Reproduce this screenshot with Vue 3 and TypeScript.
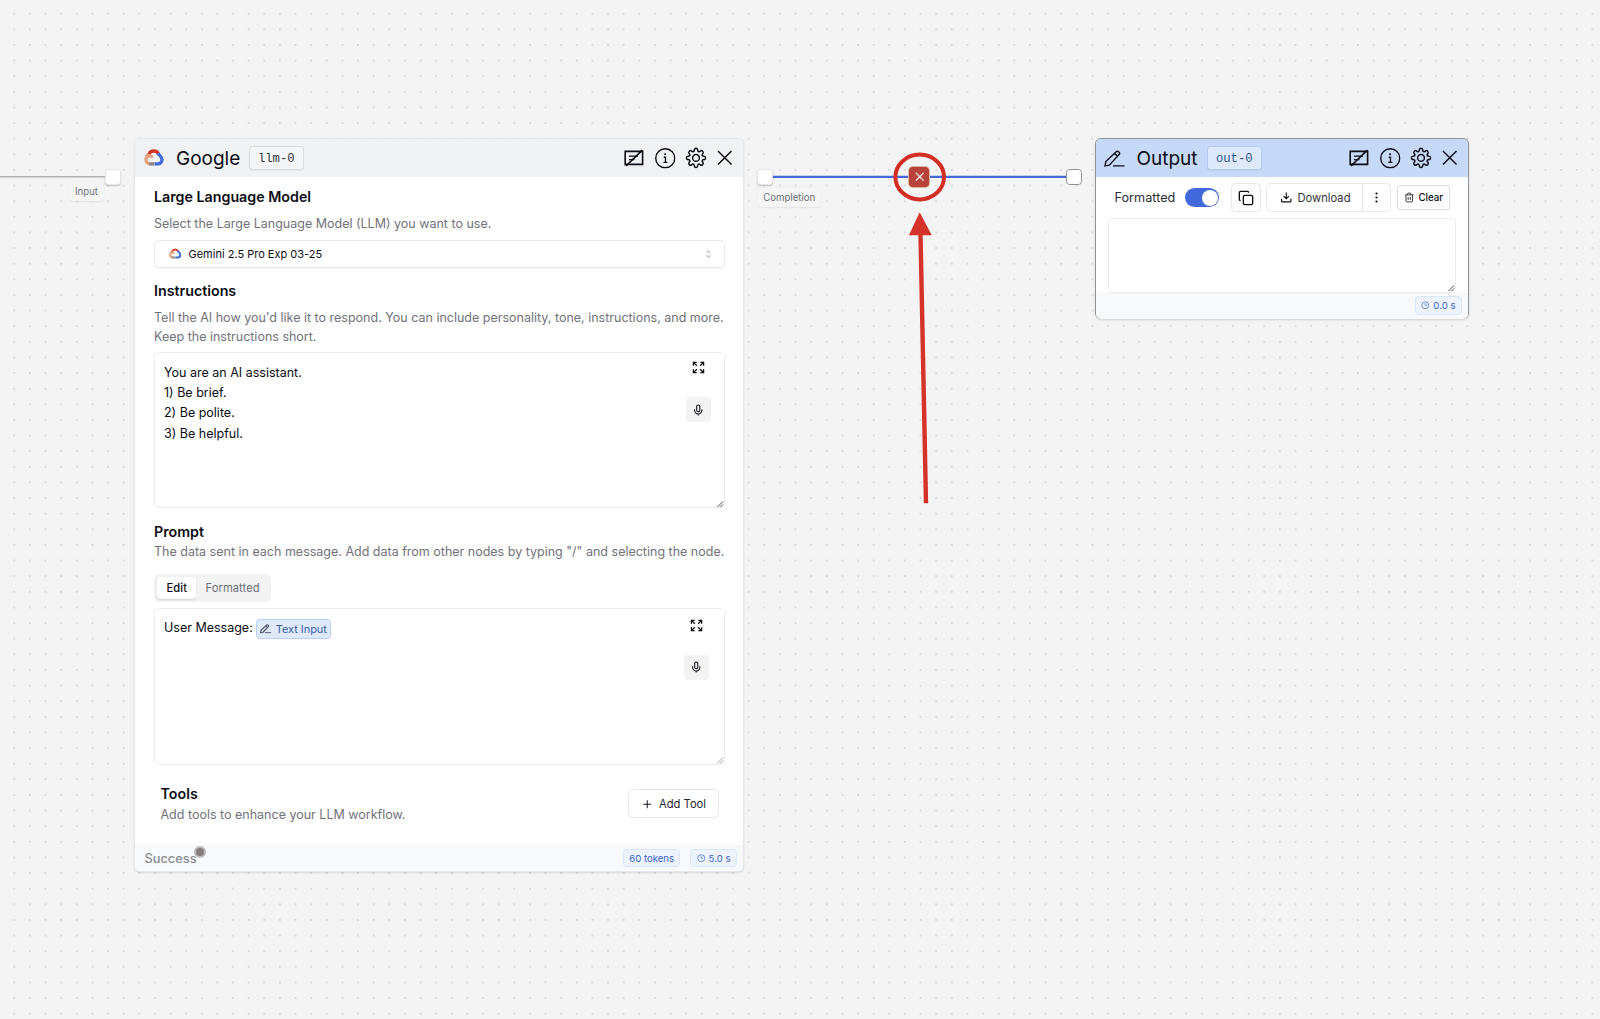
<script setup lang="ts">
const instructions: string[] = [
  'You are an AI assistant.',
  '1) Be brief.',
  '2) Be polite.',
  '3) Be helpful.',
]
</script>

<template>
  <main class="canvas">
    <svg class="grid" width="1600" height="1019" aria-hidden="true">
      <defs>
        <pattern id="dots" x="6.5" y="5.9" width="15.625" height="15.625" patternUnits="userSpaceOnUse">
          <circle cx="7.8" cy="7.8" r="0.85" fill="#cbcbcd" />
        </pattern>
        <symbol id="i-note" viewBox="0 0 20 20">
          <path d="M1.2 3.4h17.4v13H1.2z" stroke-width="1.6" />
          <path d="M5 8.1h9M5 11.6h5.4" stroke-width="1.4" />
          <path d="M2 18 18.3 2.2" stroke-width="1.7" />
        </symbol>
        <symbol id="i-info" viewBox="0 0 20 20">
          <circle cx="10" cy="10" r="9.3" stroke-width="1.35" />
          <path d="M8.5 9h1.7v4.9M8.2 14h3.9" stroke-width="1.35" />
          <circle cx="9.9" cy="6" r="1" fill="currentColor" stroke="none" />
        </symbol>
        <symbol id="i-gear" viewBox="0 0 24 24">
          <path
            d="M10.3 2.6c.3-1.5 3.1-1.5 3.4 0l.3 1.6c.1.6 1.2 1.1 1.8.8l1.4-.9c1.3-.8 3.3 1.2 2.5 2.5l-.9 1.4c-.4.6.1 1.7.8 1.800l1.700.4c1.500.3 1.500 3.100 0 3.400l-1.700.4c-.7.1-1.200 1.200-.8 1.800l.9 1.400c.8 1.300-1.200 3.300-2.500 2.500l-1.400-.9c-.6-.4-1.700.1-1.800.8l-.3 1.600c-.3 1.500-3.100 1.500-3.400 0L10 19.600c-.1-.7-1.200-1.200-1.800-.8l-1.400.9c-1.300.8-3.300-1.200-2.500-2.500l.9-1.400c.4-.6-.1-1.700-.8-1.800l-1.700-.4c-1.500-.3-1.500-3.100 0-3.400l1.700-.4c.7-.1 1.200-1.200.8-1.800l-.9-1.400C3.500 5.300 5.500 3.300 6.800 4.100l1.400.9c.6.3 1.700-.2 1.800-.8z"
            stroke-width="1.6"
          />
          <circle cx="12" cy="11.9" r="3.7" stroke-width="1.6" />
        </symbol>
        <symbol id="i-close" viewBox="0 0 16 16">
          <path d="M1 1l14 14M15 1 1 15" stroke-width="1.5" />
        </symbol>
        <symbol id="i-pen" viewBox="0 0 21 17">
          <path d="M1 15.900l.8-4.400L12.500 1.600c1.300-1.200 4 1.300 2.800 2.700L5.300 15.200 1 15.900zM10.600 3.500l2.900 2.700M9 15.900h11.500" />
        </symbol>
        <symbol id="i-expand" viewBox="0 0 14 14">
          <path d="M1.500 5V1.500H5M9 1.500h3.500V5M12.500 9v3.500H9M5 12.500H1.500V9M1.500 1.500 5.200 5.200M12.500 1.500 8.800 5.200M12.500 12.500 8.800 8.800M1.500 12.500l3.700-3.700" stroke-width="1.400" />
        </symbol>
        <symbol id="i-mic" viewBox="0 0 24 24">
          <path d="M12 2a3 3 0 0 0-3 3v7a3 3 0 0 0 6 0V5a3 3 0 0 0-3-3zM19 10v2a7 7 0 0 1-14 0v-2M12 19v3" stroke-width="2" />
        </symbol>
        <symbol id="i-clock" viewBox="0 0 24 24">
          <circle cx="12" cy="12" r="10" stroke-width="2" />
          <path d="M12 6v6h5" stroke-width="2" />
        </symbol>
        <symbol id="i-cloud" viewBox="0 0 20 17">
          <g fill="none" stroke-width="3.300" stroke-linecap="butt">
            <path d="M2.200 9.500C2.900 6.800 6.200 6.300 8.900 8.300" stroke="#e3a27d" stroke-width="3" />
            <path d="M6.200 14.900C3.900 14.900 2 13.400 2 11.100c0-2.600 1.200-5 3.400-6.300" stroke="#e3a27d" />
            <path d="M4.900 5.200C6.800.9 13 .9 14.700 5.200" stroke="#d43a2c" />
            <path d="M14.100 4.300C15 6.500 18 7.300 18 10.800c0 2.600-2 4.100-3.900 4.100H10.500" stroke="#3f6ddb" />
            <path d="M10.500 14.900H5.200" stroke="#8d8583" />
          </g>
        </symbol>
      </defs>
      <rect width="1600" height="1019" fill="url(#dots)" />
    </svg>

    <svg class="edges" width="1600" height="1019" aria-hidden="true">
      <path d="M0 176.800H108" stroke="#b1b1b3" stroke-width="1.500" />
      <path d="M770 176.800H1068" stroke="#4169d8" stroke-width="2.200" />
    </svg>

    <span class="handle soft h-in"></span>
    <span class="tag t-in">Input</span>
    <span class="handle soft h-out"></span>
    <span class="tag t-out">Completion</span>
    <span class="handle h-target"></span>

    <section class="node llm">
      <header class="head">
        <svg class="logo"><use href="#i-cloud" /></svg>
        <h1>Google</h1>
        <code>llm-0</code>
        <div class="actions">
          <svg class="ic a"><use href="#i-note" /></svg>
          <svg class="ic b"><use href="#i-info" /></svg>
          <svg class="ic c"><use href="#i-gear" /></svg>
          <svg class="ic d"><use href="#i-close" /></svg>
        </div>
      </header>

      <div class="body">
        <h2>Large Language Model</h2>
        <p class="desc d0">Select the Large Language Model (LLM) you want to use.</p>
        <div class="select">
          <svg class="logo-s"><use href="#i-cloud" /></svg>
          <span>Gemini 2.5 Pro Exp 03-25</span>
          <svg class="updown" viewBox="0 0 6 9"><path d="M.8 2.900 3 .8l2.200 2.100M.8 6.100 3 8.200l2.200-2.100" /></svg>
        </div>

        <h2 class="s2">Instructions</h2>
        <p class="desc d1">
          Tell the AI how you'd like it to respond. You can include personality, tone, instructions, and more.<br />Keep
          the instructions short.
        </p>
        <div class="area">
          <div class="text">
            <div v-for="line in instructions" :key="line">{{ line }}</div>
          </div>
          <div class="tools">
            <svg class="expand"><use href="#i-expand" /></svg>
            <span class="mic"><svg><use href="#i-mic" /></svg></span>
          </div>
          <svg class="grip" viewBox="0 0 7 7"><path d="M.5 6.500l6-6M3.700 6.500l2.800-2.800" /></svg>
        </div>

        <h2 class="s3">Prompt</h2>
        <p class="desc d3">
          The data sent in each message. Add data from other nodes by typing "/" and selecting the node.
        </p>
        <div class="tabs">
          <span class="tab on">Edit</span>
          <span class="tab">Formatted</span>
        </div>
        <div class="area second">
          <div class="text inline">
            <span>User Message:</span>
            <span class="ref"><svg class="pen-s"><use href="#i-pen" /></svg>Text Input</span>
          </div>
          <div class="tools">
            <svg class="expand"><use href="#i-expand" /></svg>
            <span class="mic"><svg><use href="#i-mic" /></svg></span>
          </div>
          <svg class="grip faint" viewBox="0 0 7 7"><path d="M.5 6.500l6-6M3.700 6.500l2.800-2.800" /></svg>
        </div>

        <div class="toolrow">
          <div>
            <h2>Tools</h2>
            <p class="desc d4">Add tools to enhance your LLM workflow.</p>
          </div>
          <span class="add">
            <svg viewBox="0 0 9 9"><path d="M4.500.3v8.400M.3 4.500h8.400" /></svg>
            Add Tool
          </span>
        </div>
      </div>

      <footer class="foot">
        <span class="status">Success<i class="pulse"></i></span>
        <span class="pill tokens">60 tokens</span>
        <span class="pill"><svg><use href="#i-clock" /></svg>5.0 s</span>
      </footer>
    </section>

    <section class="node out">
      <header class="head">
        <svg class="pen"><use href="#i-pen" /></svg>
        <h1>Output</h1>
        <code>out-0</code>
        <div class="actions">
          <svg class="ic a"><use href="#i-note" /></svg>
          <svg class="ic b"><use href="#i-info" /></svg>
          <svg class="ic c"><use href="#i-gear" /></svg>
          <svg class="ic d"><use href="#i-close" /></svg>
        </div>
      </header>
      <div class="obody">
        <div class="bar">
          <span class="lbl">Formatted</span>
          <span class="switch"><i></i></span>
          <span class="btn copy">
            <svg viewBox="0 0 24 24"><rect x="8" y="8" width="14" height="14" rx="2" /><path d="M4 16c-1.100 0-2-.9-2-2V4c0-1.100.9-2 2-2h10c1.100 0 2 .9 2 2" /></svg>
          </span>
          <span class="btn split">
            <span class="dl">
              <svg viewBox="0 0 24 24"><path d="M3 15v4a2 2 0 0 0 2 2h14a2 2 0 0 0 2-2v-4M7 10l5 5 5-5M12 15V3" /></svg>
              Download
            </span>
            <span class="more">
              <svg viewBox="0 0 3 11"><circle cx="1.500" cy="1.500" r="1.100" /><circle cx="1.500" cy="5.500" r="1.100" /><circle cx="1.500" cy="9.500" r="1.100" /></svg>
            </span>
          </span>
          <span class="btn clear">
            <svg viewBox="0 0 24 24"><path d="M2.500 6h19M19.500 6v14c0 1-1 2-2 2h-11c-1 0-2-1-2-2V6M8 6V4c0-1 1-2 2-2h4c1 0 2 1 2 2v2M9.500 11v6.500M14.500 11v6.500" /></svg>
            Clear
          </span>
        </div>
        <div class="oarea">
          <svg class="grip" viewBox="0 0 7 7"><path d="M.5 6.500l6-6M3.700 6.500l2.800-2.800" /></svg>
        </div>
      </div>
      <footer class="foot">
        <span class="pill"><svg><use href="#i-clock" /></svg>0.0 s</span>
      </footer>
    </section>

    <span class="remove">
      <svg viewBox="0 0 10 10"><path d="M1 1l8 8M9 1 1 9" /></svg>
    </span>

    <svg class="marks" width="1600" height="1019" aria-hidden="true">
      <ellipse cx="919.700" cy="177" rx="24.300" ry="22.400" fill="none" stroke="#d32f25" stroke-width="4" />
      <path d="M919.700 212.300 931.800 235.300h-22.900z" fill="#d5332a" stroke="none" />
      <path d="M920.500 234 926 503.300" stroke="#d5332a" stroke-width="4.400" />
    </svg>
  </main>
</template>

<style>
body {
  background: #f4f4f4;
}
</style>

<style scoped>
.canvas {
  position: relative;
  width: 1600px;
  height: 1019px;
  overflow: hidden;
  background: #f4f4f4;
  color: #0b0c14;
  font-family: Inter, 'Liberation Sans', sans-serif;
}
.canvas * {
  box-sizing: border-box;
}
svg {
  flex: none;
  display: block;
  overflow: visible;
  fill: none;
  stroke: currentColor;
}
.grid {
  stroke: none;
}
.grid,
.edges,
.marks {
  position: absolute;
  left: 0;
  top: 0;
}
.handle {
  position: absolute;
  top: 168.600px;
  width: 16px;
  height: 16px;
  border: 1.200px solid #929292;
  border-radius: 3.500px;
  background: #fff;
}
.handle.soft {
  border-color: #e6e6e7;
  box-shadow: 0 1px 1.500px rgba(0, 0, 0, 0.2);
}
.h-in {
  left: 105.400px;
}
.h-out {
  left: 757px;
}
.h-target {
  left: 1066px;
}
.tag {
  position: absolute;
  display: flex;
  align-items: center;
  justify-content: center;
  height: 19px;
  border-radius: 4px;
  background: #f5f5f5;
  box-shadow: 0 0.500px 1.500px rgba(0, 0, 0, 0.07);
  color: #6f7079;
  font-size: 9.650px;
}
.t-in {
  left: 69px;
  top: 182px;
  width: 35px;
}
.t-out {
  left: 757.500px;
  top: 188px;
  width: 63.500px;
}
.node {
  position: absolute;
  top: 139px;
  display: flex;
  flex-direction: column;
  border-radius: 5px;
  background: #fff;
}
.llm {
  left: 135px;
  width: 608px;
  height: 732px;
  box-shadow:
    0 0 0 1px #e6e7e9,
    0 1px 2.500px rgba(0, 0, 0, 0.28);
}
.out {
  left: 1096px;
  width: 372px;
  height: 179px;
  box-shadow:
    0 0 0 1px #929398,
    0 1px 3px rgba(0, 0, 0, 0.3);
}
.head {
  display: flex;
  align-items: center;
  flex: none;
  height: 38px;
  border-radius: 5px 5px 0 0;
  background: #f1f2f4;
}
.out .head {
  background: #c6d9f8;
}
.logo {
  width: 20px;
  height: 17px;
  margin-left: 9px;
  position: relative;
  top: -0.500px;
}
.pen {
  width: 21px;
  height: 17px;
  margin-left: 8px;
  stroke-width: 1.400;
}
h1 {
  margin: 1px 0 0 12px;
  width: 73px;
  font-size: 19px;
  font-weight: 400;
  line-height: 30px;
}
.out h1 {
  margin-left: 11.500px;
  width: 70.500px;
}
code {
  display: flex;
  align-items: center;
  justify-content: center;
  width: 54.500px;
  height: 23.500px;
  padding-top: 1px;
  border: 1px solid #d9dbde;
  border-radius: 3.500px;
  background: #f4f5f6;
  color: #33343c;
  font:
    12.200px 'Liberation Mono',
    monospace;
  box-shadow: 0 1px 1px rgba(0, 0, 0, 0.05);
}
.out code {
  border-color: #b3cbf0;
  background: #deeafb;
  color: #2f5597;
}
.actions {
  display: flex;
  align-items: center;
  margin-left: auto;
  margin-right: 10.900px;
}
.a {
  width: 20px;
  height: 20px;
}
.b {
  width: 20.500px;
  height: 20.500px;
  margin-left: 11px;
}
.c {
  width: 22px;
  height: 22px;
  margin-left: 10px;
}
.d {
  width: 15.500px;
  height: 15.500px;
  margin-left: 9.500px;
}
.body {
  flex: 1;
  padding: 10px 18.500px 0 19px;
}
h2 {
  margin: 0;
  font-size: 14.250px;
  font-weight: 600;
  line-height: 20px;
}
.desc {
  margin: 0;
  color: #71727a;
  font-size: 12.500px;
  line-height: 18.700px;
  white-space: nowrap;
}
.d0 {
  margin-top: 7.800px;
}
.d1 {
  margin-top: 8px;
}
.select {
  display: flex;
  align-items: center;
  height: 28px;
  margin-top: 6.500px;
  padding: 0 13px 0 13.500px;
  border: 1px solid #e8e8ea;
  border-radius: 4.500px;
  font-size: 11px;
  box-shadow: 0 1px 1px rgba(0, 0, 0, 0.05);
}
.logo-s {
  width: 12.500px;
  height: 11px;
  margin-right: 7.500px;
  position: relative;
  top: -0.500px;
}
.updown {
  width: 5px;
  height: 8px;
  margin-left: auto;
  color: #77787c;
}
.s2 {
  margin-top: 13.200px;
}
.area {
  position: relative;
  display: flex;
  height: 156px;
  margin-top: 5.900px;
  border: 1px solid #ececee;
  border-radius: 5px;
}
.text {
  flex: 1;
  padding: 9.400px 0 0 9px;
  font-size: 12.500px;
  line-height: 20.300px;
}
.tools {
  display: flex;
  flex-direction: column;
  align-items: center;
  width: 25px;
  margin-right: 13px;
  padding-top: 8px;
}
.expand {
  width: 13px;
  height: 13px;
}
.mic {
  display: flex;
  align-items: center;
  justify-content: center;
  width: 25px;
  height: 25px;
  margin-top: 23px;
  border-radius: 4px;
  background: #f3f3f4;
}
.mic svg {
  width: 12.500px;
  height: 12.500px;
}
.grip {
  position: absolute;
  right: 0.500px;
  bottom: 0;
  width: 6.500px;
  height: 6.500px;
  color: #3c3c3c;
}
.grip.faint {
  color: #999;
}
.s3 {
  margin-top: 13.500px;
}
.d3 {
  margin-top: 0.900px;
}
.tabs {
  display: flex;
  align-items: center;
  width: 117px;
  height: 28px;
  margin-top: 12.500px;
  padding: 0 3px;
  border-radius: 5px;
  background: #f3f3f4;
  font-size: 11.200px;
}
.tab {
  padding: 0 9px 0 9.500px;
  line-height: 22.500px;
  color: #6d6e76;
  letter-spacing: 0.050px;
}
.tab.on {
  border-radius: 4px;
  background: #fff;
  color: #0b0c14;
  font-weight: 500;
  box-shadow: 0 1px 2px rgba(0, 0, 0, 0.14);
}
.second {
  margin-top: 6px;
  height: 156.500px;
}
.second .tools {
  margin-right: 14.800px;
  padding-top: 10px;
}
.inline {
  display: flex;
  align-items: flex-start;
}
.ref {
  display: flex;
  align-items: center;
  height: 20px;
  margin: 0.600px 0 0 3.500px;
  padding: 0 3.500px 0 3px;
  border: 1px solid #b9d0f6;
  border-radius: 3.500px;
  background: #deeafb;
  color: #3c5da6;
  font-size: 10.900px;
}
.pen-s {
  width: 11.500px;
  height: 9.500px;
  margin-right: 4px;
  color: #4a4d5c;
  stroke-width: 2;
}
.toolrow {
  display: flex;
  align-items: center;
  justify-content: space-between;
  margin-top: 19px;
  padding: 0 6px 0 6.500px;
}
.d4 {
  margin-top: 2.100px;
}
.add {
  display: flex;
  align-items: center;
  width: 91px;
  height: 29px;
  padding-left: 14px;
  border: 1px solid #e8e8ea;
  border-radius: 4.500px;
  color: #24252f;
  font-size: 11.200px;
}
.add svg {
  width: 8.500px;
  height: 8.500px;
  margin-right: 8px;
  color: #0b0c14;
}
.foot {
  display: flex;
  align-items: center;
  flex: none;
  height: 26px;
  margin-top: auto;
  padding: 0 6.500px 1px 9.500px;
  border-top: 1px solid #f3f4f6;
  border-radius: 0 0 5px 5px;
  background: #f8f9fb;
}
.out .foot {
  justify-content: flex-end;
  padding-right: 6.500px;
}
.status {
  position: relative;
  margin-right: auto;
  color: #8b8d94;
  font-size: 12.800px;
  font-weight: 500;
}
.pulse {
  position: absolute;
  left: 49.500px;
  top: -5px;
  width: 12px;
  height: 12px;
  border: 2px solid #bcbcbc;
  border-radius: 50%;
  background: #857e7e;
}
.pill {
  display: flex;
  align-items: center;
  height: 18.500px;
  padding: 0 5px 0 5.500px;
  border: 1px solid #d9e6fb;
  border-radius: 4px;
  background: #edf4fd;
  color: #3a62c9;
  font-size: 9.600px;
}
.pill svg {
  width: 8.500px;
  height: 8.500px;
  margin-right: 3.500px;
}
.tokens {
  margin-right: 10px;
  padding: 0 5px;
}
.obody {
  padding: 6.500px 12.500px 0 12px;
}
.bar {
  display: flex;
  align-items: center;
  height: 28px;
  padding-left: 6.500px;
}
.lbl {
  width: 70px;
  color: #2c2d35;
  font-size: 12.700px;
}
.switch {
  display: flex;
  align-items: center;
  justify-content: flex-end;
  width: 34.500px;
  height: 19px;
  padding: 1.500px;
  border-radius: 10px;
  background: #4169dc;
}
.switch i {
  width: 16px;
  height: 16px;
  border-radius: 50%;
  background: #fff;
}
.btn {
  display: flex;
  align-items: center;
  height: 28.500px;
  border: 1px solid #e8e8ea;
  border-radius: 4.500px;
  background: #fff;
}
.copy {
  justify-content: center;
  width: 29.500px;
  margin-left: 12px;
}
.copy svg {
  width: 16px;
  height: 16px;
  stroke-width: 2;
}
.split {
  width: 125px;
  margin-left: 5.500px;
  color: #33343b;
  font-size: 11.200px;
}
.dl {
  display: flex;
  align-items: center;
  width: 96px;
  height: 100%;
  padding-left: 12.500px;
  border-right: 1px solid #e8e8ea;
}
.dl svg {
  width: 12.500px;
  height: 12.500px;
  margin-right: 5.500px;
  stroke-width: 2.200;
  color: #0b0c14;
}
.more {
  display: flex;
  flex: 1;
  justify-content: center;
}
.more svg {
  width: 3px;
  height: 11px;
  fill: #0b0c14;
  stroke: none;
}
.clear {
  width: 52.500px;
  height: 25px;
  margin-left: 6px;
  padding-left: 6px;
  border-color: #dcdcde;
  border-radius: 3px;
  font-size: 9.700px;
  font-weight: 500;
}
.clear svg {
  width: 10.500px;
  height: 11px;
  margin-right: 4px;
  stroke-width: 1.800;
}
.oarea {
  position: relative;
  height: 74.500px;
  margin-top: 6.500px;
  border: 1px solid #ececee;
  border-radius: 4px;
}
.remove {
  position: absolute;
  left: 909.400px;
  top: 166.700px;
  display: flex;
  align-items: center;
  justify-content: center;
  width: 20px;
  height: 20px;
  border-radius: 4px;
  background: #b8433a;
  box-shadow: 0 0 0 1px #d9b59a;
  color: #fff;
}
.remove svg {
  width: 9.500px;
  height: 9.500px;
  stroke-width: 1.200;
}
</style>
